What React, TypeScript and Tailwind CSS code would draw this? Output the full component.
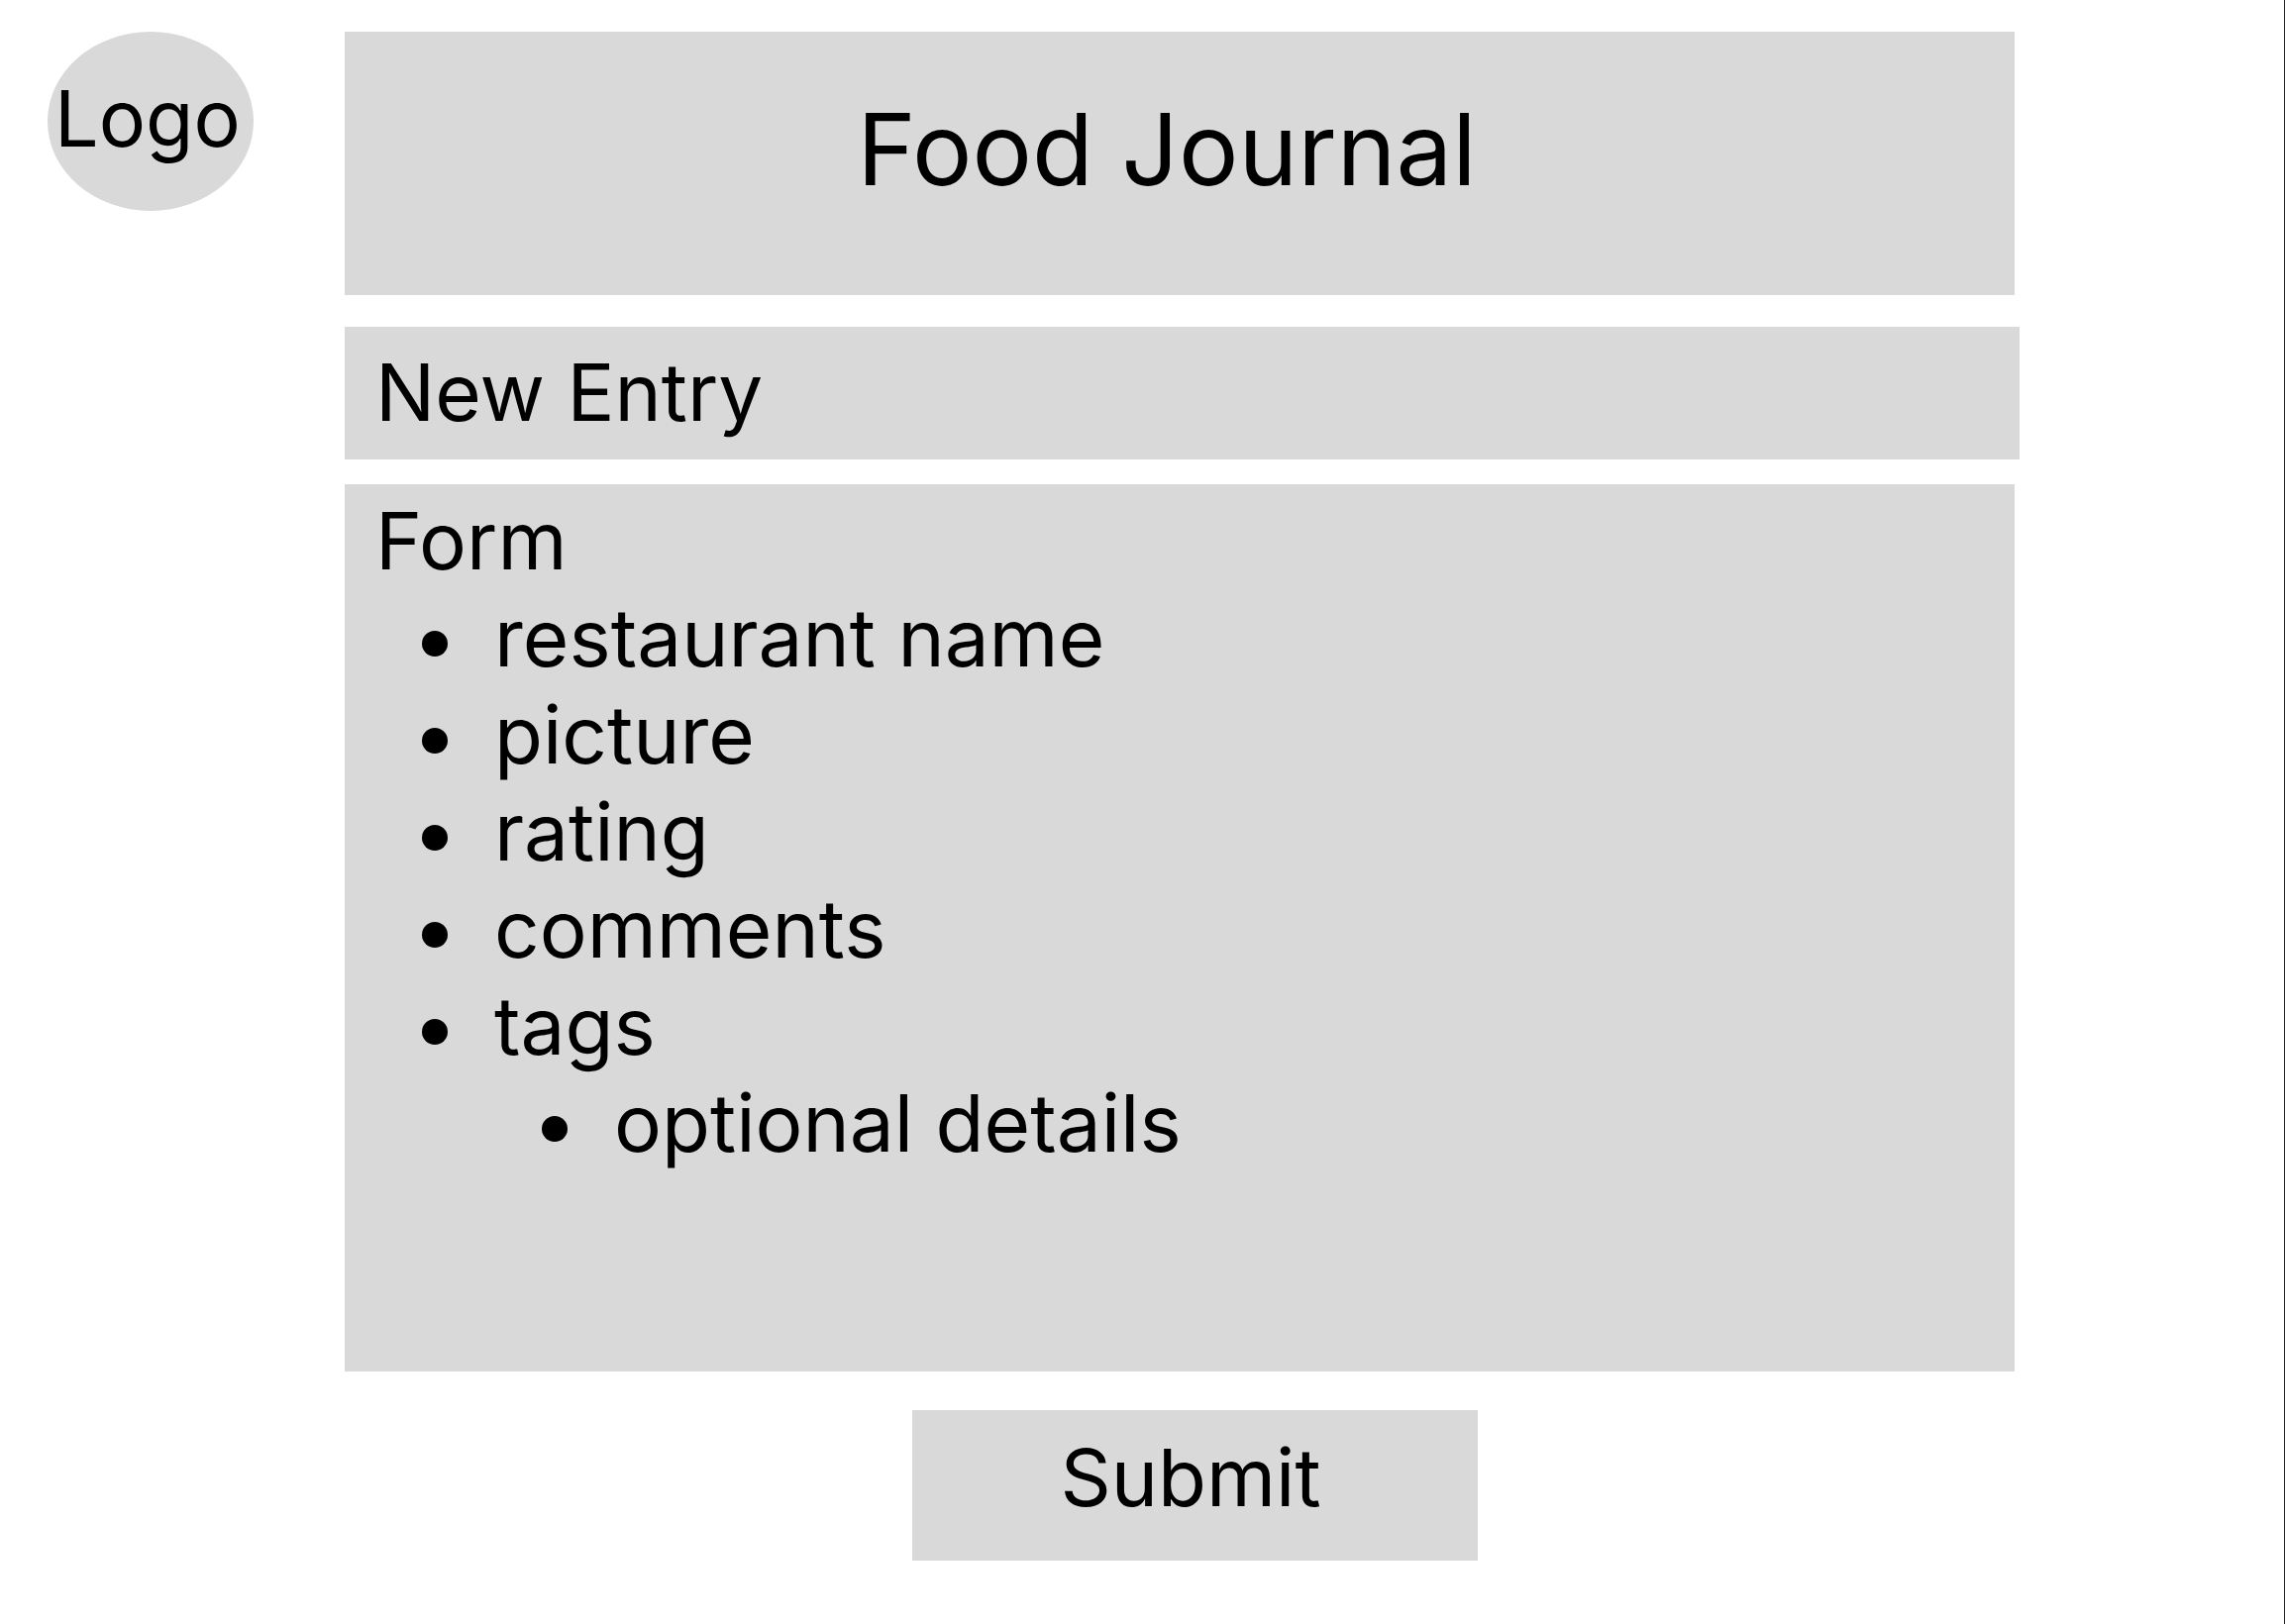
import React from "react";

function Item({ text, nested = false }: { text: string; nested?: boolean }) {
  return (
    <li className="flex items-start">
      <span
        className={
          nested
            ? "ml-[168px] mt-[42px] w-[26px] h-[26px] rounded-full bg-black shrink-0"
            : "ml-[47px] mt-[42px] w-[26px] h-[26px] rounded-full bg-black shrink-0"
        }
      />
      <span className="ml-[47px] whitespace-nowrap">{text}</span>
    </li>
  );
}

export default function App() {
  return (
    <div className="w-[2307px] h-[1640px] bg-white border-r border-[#222222] flex items-start pt-[32px] pl-[48px] font-['Inter',sans-serif] text-black">
      <div className="w-[208px] h-[181px] rounded-[50%] bg-[#d9d9d9] shrink-0 pt-[40px] pl-[7px] text-[79px] leading-[1.2]">
        Logo
      </div>
      <div className="ml-[92px] flex flex-col items-start">
        <div className="w-[1686px] h-[266px] bg-[#d9d9d9] flex justify-center pt-[58px] pr-[26px] text-[101px] leading-[1.2]">
          Food Journal
        </div>
        <div className="mt-[32px] w-[1691px] h-[134px] bg-[#d9d9d9] pt-[17px] pl-[31px] text-[80px] leading-[98px]">
          New Entry
        </div>
        <div className="mt-[25px] w-[1686px] h-[896px] bg-[#d9d9d9] pt-[8px] pl-[31px] text-[80px] leading-[98px]">
          <div>Form</div>
          <ul>
            <Item text="restaurant name" />
            <Item text="picture" />
            <Item text="rating" />
            <Item text="comments" />
            <Item text="tags" />
            <Item text="optional details" nested />
          </ul>
        </div>
        <div className="mt-[39px] ml-[573px] w-[571px] h-[152px] bg-[#d9d9d9] flex justify-center pt-[19px] pr-[9px] text-[80px] leading-[98px]">
          Submit
        </div>
      </div>
    </div>
  );
}
